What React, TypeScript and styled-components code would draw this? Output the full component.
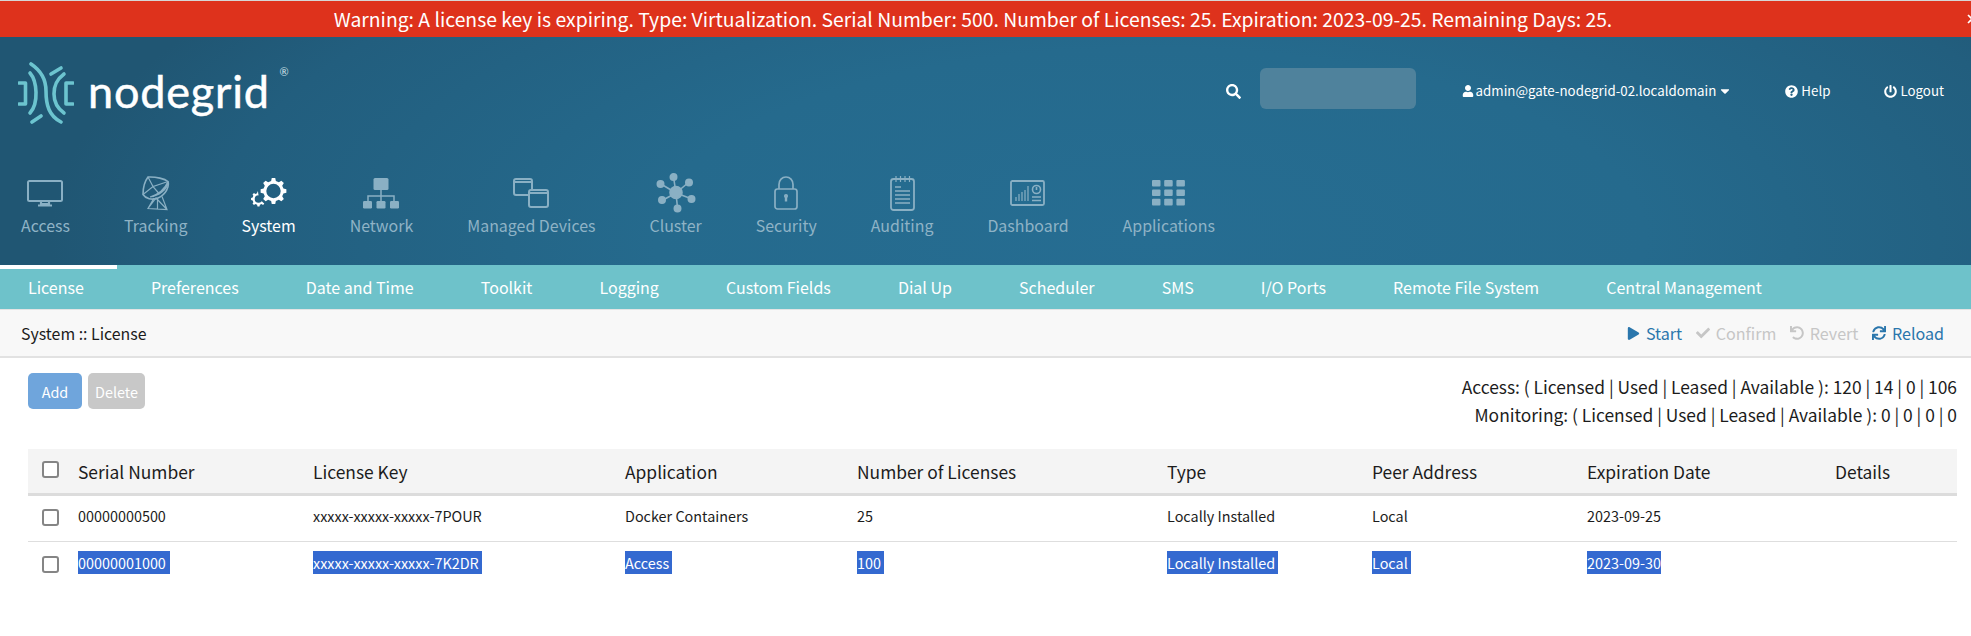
import React from "react";
import styled, { createGlobalStyle } from "styled-components";
import { FaCaretDown, FaCheck, FaPlay, FaPowerOff, FaQuestionCircle, FaSearch, FaSync, FaUndo, FaUser } from "react-icons/fa";

const FONT = `"Noto Sans CJK SC", "Open Sans", sans-serif`;
const NAV_ICON = "#8ab0c4";

const GlobalStyle = createGlobalStyle`
  html, body {
    margin: 0;
    background: #fff;
    font-family: ${FONT};
    color: #1c1c1c;
  }
  * { box-sizing: border-box; }
`;

const Page = styled.div`
  width: 1971px;
  height: 636px;
  overflow: hidden;
  border-top: 1px solid #d6d6d6;
`;

const Banner = styled.div`
  position: relative;
  height: 36px;
  background: #de321c;
  color: #fff;
  font-size: 19.35px;
  line-height: 36px;
  text-align: center;
  padding-right: 25px;
  overflow: hidden;
`;

const BannerClose = styled.svg`
  position: absolute;
  right: -6px;
  top: 13px;
`;

const Header = styled.header`
  height: 228px;
  background: radial-gradient(ellipse 1100px 420px at 1150px 200px, #266d92 0%, #256a8d 45%, #225e7e 85%, #205673 100%);
`;

const TopBar = styled.div`
  height: 112px;
  margin-bottom: 24px;
  display: flex;
  align-items: center;
  justify-content: space-between;
  padding: 0 27px 0 18px;
`;

const Logo = styled.div`
  display: flex;
  align-items: center;
`;

const LogoWord = styled.span`
  position: relative;
  margin: 0 0 5px 14px;
  font-family: "Lato", sans-serif;
  font-size: 45px;
  line-height: 50px;
  color: #fff;
  letter-spacing: 0.8px;
  -webkit-text-stroke: 0.5px #fff;
`;

const Registered = styled.span`
  position: absolute;
  right: -19px;
  top: 0;
  font-size: 11px;
  line-height: 12px;
  color: #cfe0e8;
  letter-spacing: 0;
  -webkit-text-stroke: 0;
`;

const TopActions = styled.div`
  display: flex;
  align-items: center;
  padding-bottom: 4px;
  color: #fff;
  font-size: 13.3px;
`;

const SearchBox = styled.div`
  width: 156px;
  height: 41px;
  margin: 0 46px 5px 19px;
  border-radius: 6px;
  background: #4f829c;
`;

const TopLink = styled.span<{ $gap?: number; $iconGap?: number }>`
  display: inline-flex;
  align-items: center;
  gap: ${(props) => props.$iconGap ?? 3}px;
  margin-left: ${(props) => props.$gap ?? 0}px;
  line-height: 20px;
`;

const MainNav = styled.nav`
  display: flex;
  gap: 54px;
  padding-left: 21px;
`;

const NavItem = styled.div<{ $active?: boolean }>`
  display: flex;
  flex-direction: column;
  align-items: center;
  color: ${(props) => (props.$active ? "#fff" : "#8fb3c6")};
  font-size: 15.95px;
  line-height: 20px;
`;

const NavIcon = styled.div`
  height: 40px;
  margin-bottom: 2px;
  display: flex;
  align-items: center;
  justify-content: center;
`;

const TabBar = styled.div`
  height: 45px;
  display: flex;
  gap: 67.1px;
  padding-left: 28px;
  background: #6ec2ca;
  border-bottom: 1px solid #e4e4e4;
  color: #fff;
  font-size: 16px;
  line-height: 44px;
`;

const Tab = styled.div<{ $active?: boolean }>`
  position: relative;
  &::before {
    content: "";
    display: ${(props) => (props.$active ? "block" : "none")};
    position: absolute;
    left: -28px;
    top: 0;
    width: 117px;
    height: 4px;
    background: #fff;
  }
`;

const Breadcrumb = styled.div`
  height: 48px;
  display: flex;
  align-items: center;
  justify-content: space-between;
  padding: 0 27px 0 21px;
  background: #f8f8f8;
  border-bottom: 2px solid #e2e2e2;
  font-size: 15.9px;
`;

const Actions = styled.div`
  display: flex;
  gap: 14px;
  font-size: 16.1px;
`;

const Action = styled.span<{ $disabled?: boolean }>`
  display: inline-flex;
  align-items: center;
  gap: 5.5px;
  color: ${(props) => (props.$disabled ? "#c6c6c6" : "#2a76ac")};
`;

const Content = styled.main`
  padding: 15px 14px 0 28px;
`;

const ToolRow = styled.div`
  height: 76px;
  display: flex;
  justify-content: space-between;
`;

const Buttons = styled.div`
  display: flex;
  gap: 6px;
  align-items: flex-start;
`;

const Button = styled.button<{ $color: string; $width: number }>`
  width: ${(props) => props.$width}px;
  height: 36px;
  border: 0;
  border-radius: 5px;
  background: ${(props) => props.$color};
  color: #fff;
  font-family: ${FONT};
  font-size: 14.4px;
  padding: 0;
`;

const Stats = styled.div`
  text-align: right;
  font-size: 17.4px;
  line-height: 28px;
`;

const Row = styled.div<{ $head?: boolean; $height: number }>`
  height: ${(props) => props.$height}px;
  display: grid;
  grid-template-columns: 50px 235px 312px 232px 310px 205px 215px 248px 122px;
  align-items: center;
  background: ${(props) => (props.$head ? "#f4f4f4" : "transparent")};
  border-bottom: ${(props) => (props.$head ? "3px solid #dcdcdc" : "1px solid #dedede")};
  font-size: ${(props) => (props.$head ? 17.4 : 14.4)}px;
`;

const LastRow = styled(Row)`
  border-bottom: 0;
`;

const Cell = styled.div<{ $lift?: number }>`
  margin-bottom: ${(props) => props.$lift ?? 0}px;
`;

const CheckCell = styled(Cell)`
  padding-left: 14px;
  display: flex;
`;

const CheckBox = styled.span`
  display: block;
  width: 17px;
  height: 17px;
  border: 2px solid #858585;
  border-radius: 3px;
  background: #fff;
`;

const Selected = styled.span<{ $trail: number }>`
  display: inline-block;
  height: 23px;
  line-height: 23px;
  padding-right: ${(props) => props.$trail}px;
  background: #3469d0;
  color: #fff;
`;

const gearPath = (cx: number, cy: number, outer: number, inner: number, hole: number, teeth: number) => {
  const pts: string[] = [];
  for (let i = 0; i < teeth; i++) {
    const step = (Math.PI * 2) / teeth;
    const a = i * step;
    [
      [inner, a - step * 0.3],
      [outer, a - step * 0.17],
      [outer, a + step * 0.17],
      [inner, a + step * 0.3],
    ].forEach(([r, t]) => pts.push(`${(cx + r * Math.cos(t)).toFixed(2)} ${(cy + r * Math.sin(t)).toFixed(2)}`));
  }
  const ring = `M${cx - hole} ${cy}a${hole} ${hole} 0 1 0 ${hole * 2} 0a${hole} ${hole} 0 1 0 ${-hole * 2} 0Z`;
  return `M${pts.join("L")}Z${ring}`;
};

const LogoMark = () => (
  <svg width="56" height="62" viewBox="0 0 56 62" fill="none" stroke="#6cc4cf" strokeWidth="3.6" strokeLinecap="round" strokeLinejoin="round">
    <path d="M1 21h6.5v21H1" />
    <path d="M12 11c7 8 9 30 0 40" />
    <path d="M13 2c12 8 15 17 15 27 0 14 3 25 15 31" />
    <path d="M33 12l10-6" />
    <path d="M14 60l9-6" />
    <path d="M46 12c-8 6-10 12-10 20s3 14 10 19" />
    <path d="M55 21h-7v21h7" />
  </svg>
);

const iconProps = { fill: "none", stroke: NAV_ICON, strokeWidth: 2 };

const AccessIcon = () => (
  <svg width="36" height="27" viewBox="0 0 36 27" {...iconProps}>
    <rect x="1" y="1" width="34" height="20" rx="1.5" />
    <path d="M14 22v2h8v-2M11 25.5h14" strokeWidth="2.2" />
  </svg>
);

const TrackingIcon = () => (
  <svg width="28" height="35" viewBox="0 0 28 35" {...iconProps} strokeWidth="1.2">
    <path d="M6 1c8-.5 17 2 20 4.500 1.500 5-2 13-10 16.500-6 2.500-12.500.5-15-3.500C1 12 3 5 6 1Z" strokeWidth="1.6" />
    <path d="M26 5.500c-3 7-10 13-18 15.500 8-1 18-7 18-15.500Z" fill={NAV_ICON} />
    <path d="M6 1l5 9.500L26 5.500M1 18.500L11 10.500l6 7" />
    <path d="M12 22l-6 10.500 19 1-5-13M6 32.500l8-10.500 11 11.500M15.500 22v11" />
  </svg>
);

const SystemIcon = ({ color }: { color: string }) => (
  <svg width="36" height="30" viewBox="0 0 36 30">
    <mask id="small-gear">
      <rect width="36" height="30" fill="#fff" />
      <circle cx="22.5" cy="13" r="15.5" fill="#000" />
    </mask>
    <path fill={color} fillRule="evenodd" d={gearPath(22.500, 13, 13, 10.200, 7.200, 8)} />
    <path fill={color} fillRule="evenodd" mask="url(#small-gear)" d={gearPath(7.5, 21, 7.5, 6, 3.8, 8)} />
  </svg>
);

const NetworkIcon = () => (
  <svg width="36" height="31" viewBox="0 0 36 31">
    <rect x="10.5" y="0" width="15" height="12" rx="1.5" fill={NAV_ICON} />
    <path d="M18 12v6M5 24v-6h26v6M18 18v6" stroke={NAV_ICON} strokeWidth="1.5" fill="none" />
    <rect x="0" y="23" width="9" height="7.5" rx="1.2" fill={NAV_ICON} />
    <rect x="13.5" y="23" width="9" height="7.5" rx="1.2" fill={NAV_ICON} />
    <rect x="27" y="23" width="9" height="7.5" rx="1.2" fill={NAV_ICON} />
  </svg>
);

const ManagedIcon = () => (
  <svg width="36" height="30" viewBox="0 0 36 30" {...iconProps}>
    <path d="M15 17H3a2 2 0 0 1-2-2V3a2 2 0 0 1 2-2h14a2 2 0 0 1 2 2v8M1 4h18" />
    <rect x="16" y="12" width="19" height="17" rx="2" />
    <path d="M16 15h19" />
  </svg>
);

const ClusterIcon = () => (
  <svg width="40" height="40" viewBox="0 0 40 40" fill={NAV_ICON} stroke={NAV_ICON} strokeWidth="1.6">
    <path d="M20 20L17.5 4M20 20L33 9M20 20L36 26M20 20L21.5 35M20 20L7 27M20 20L5 11" fill="none" />
    <circle cx="20" cy="19.5" r="6" />
    <circle cx="17.5" cy="4" r="3.2" />
    <circle cx="33" cy="9.5" r="3.2" />
    <circle cx="35.5" cy="26" r="3.2" />
    <circle cx="21.5" cy="35.5" r="3.2" />
    <circle cx="6" cy="27" r="3.2" />
    <circle cx="4.5" cy="11" r="3.2" />
  </svg>
);

const SecurityIcon = () => (
  <svg width="24" height="34" viewBox="0 0 24 34" {...iconProps} strokeWidth="1.7">
    <rect x="1" y="13" width="22" height="20" rx="2.5" />
    <path d="M5 13V8.5C5 4 8 1 12 1s7 3 7 7.5V13" />
    <path d="M12 20.5v5" strokeWidth="2.4" />
    <circle cx="12" cy="20" r="1.2" />
  </svg>
);

const AuditingIcon = () => (
  <svg width="25" height="36" viewBox="0 0 25 36" {...iconProps} strokeWidth="1.5">
    <rect x="1" y="4" width="23" height="31" rx="2.5" strokeWidth="1.8" />
    <path d="M6 1v6M10.5 1v6M15 1v6M19.5 1v6" strokeWidth="1.2" />
    <path d="M5 12h6M5 16h15M5 20h15M5 24h15M5 28h15" strokeWidth="1.6" />
  </svg>
);

const DashboardIcon = () => (
  <svg width="35" height="26" viewBox="0 0 35 26" {...iconProps} strokeWidth="1.6">
    <rect x="1" y="1" width="33" height="24" rx="1.5" strokeWidth="1.8" />
    <path d="M6 21v-4M9 21v-7M12 21v-9M15 21v-11M18 21V6" strokeWidth="1.2" />
    <circle cx="26.5" cy="9.5" r="4" />
    <path d="M26.5 7v3M22 17h9M22 20.5h9" />
  </svg>
);

const ApplicationsIcon = () => (
  <svg width="33" height="26" viewBox="0 0 33 26" fill={NAV_ICON}>
    {[0, 1, 2].flatMap((r) =>
      [0, 1, 2].map((c) => <rect key={`${r}-${c}`} x={c * 12.2} y={r * 9.4} width="8.5" height="6.6" rx="1" />)
    )}
  </svg>
);

const NAV = [
  { label: "Access", icon: <AccessIcon /> },
  { label: "Tracking", icon: <TrackingIcon /> },
  { label: "System", icon: <SystemIcon color="#fff" />, active: true },
  { label: "Network", icon: <NetworkIcon /> },
  { label: "Managed Devices", icon: <ManagedIcon /> },
  { label: "Cluster", icon: <ClusterIcon /> },
  { label: "Security", icon: <SecurityIcon /> },
  { label: "Auditing", icon: <AuditingIcon /> },
  { label: "Dashboard", icon: <DashboardIcon /> },
  { label: "Applications", icon: <ApplicationsIcon /> },
];

const TABS = ["License", "Preferences", "Date and Time", "Toolkit", "Logging", "Custom Fields", "Dial Up", "Scheduler", "SMS", "I/O Ports", "Remote File System", "Central Management"];

const COLUMNS = ["Serial Number", "License Key", "Application", "Number of Licenses", "Type", "Peer Address", "Expiration Date", "Details"];

const ROW_ONE = ["00000000500", "xxxxx-xxxxx-xxxxx-7POUR", "Docker Containers", "25", "Locally Installed", "Local", "2023-09-25"];

const ROW_TWO: [string, number][] = [
  ["00000001000", 4],
  ["xxxxx-xxxxx-xxxxx-7K2DR", 3],
  ["Access", 3],
  ["100", 3],
  ["Locally Installed", 3],
  ["Local", 3],
  ["2023-09-30", 0],
];

export default function App() {
  return (
    <Page>
      <GlobalStyle />
      <Banner>
        Warning: A license key is expiring. Type: Virtualization. Serial Number: 500. Number of Licenses: 25. Expiration: 2023-09-25. Remaining Days: 25.
        <BannerClose width="10" height="10" viewBox="0 0 10 10" fill="none" stroke="#fff" strokeWidth="1.6">
          <path d="M1 1l8 8M9 1l-8 8" />
        </BannerClose>
      </Banner>
      <Header>
        <TopBar>
          <Logo>
            <LogoMark />
            <LogoWord>
              nodegrid
              <Registered>®</Registered>
            </LogoWord>
          </Logo>
          <TopActions>
            <FaSearch size={15} />
            <SearchBox />
            <TopLink $iconGap={2}>
              <FaUser size={12} />
              admin@gate-nodegrid-02.localdomain
              <FaCaretDown size={14} />
            </TopLink>
            <TopLink $gap={53}>
              <FaQuestionCircle size={13} />
              Help
            </TopLink>
            <TopLink $gap={54}>
              <FaPowerOff size={13} />
              Logout
            </TopLink>
          </TopActions>
        </TopBar>
        <MainNav>
          {NAV.map((item) => (
            <NavItem key={item.label} $active={item.active}>
              <NavIcon>{item.icon}</NavIcon>
              {item.label}
            </NavItem>
          ))}
        </MainNav>
      </Header>
      <TabBar>
        {TABS.map((tab, i) => (
          <Tab key={tab} $active={i === 0}>
            {tab}
          </Tab>
        ))}
      </TabBar>
      <Breadcrumb>
        System :: License
        <Actions>
          <Action>
            <FaPlay size={13} />
            Start
          </Action>
          <Action $disabled>
            <FaCheck size={14} />
            Confirm
          </Action>
          <Action $disabled>
            <FaUndo size={14} />
            Revert
          </Action>
          <Action>
            <FaSync size={14} />
            Reload
          </Action>
        </Actions>
      </Breadcrumb>
      <Content>
        <ToolRow>
          <Buttons>
            <Button $color="#6fa5dc" $width={54}>Add</Button>
            <Button $color="#c8c8c8" $width={57}>Delete</Button>
          </Buttons>
          <Stats>
            <div>Access: ( Licensed | Used | Leased | Available ): 120 | 14 | 0 | 106</div>
            <div>Monitoring: ( Licensed | Used | Leased | Available ): 0 | 0 | 0 | 0</div>
          </Stats>
        </ToolRow>
        <Row $head $height={47}>
          <CheckCell $lift={3}><CheckBox /></CheckCell>
          {COLUMNS.map((col) => (
            <Cell key={col}>{col}</Cell>
          ))}
        </Row>
        <Row $height={46}>
          <CheckCell $lift={2}><CheckBox /></CheckCell>
          {ROW_ONE.map((cell) => (
            <Cell key={cell} $lift={6}>{cell}</Cell>
          ))}
        </Row>
        <LastRow $height={44}>
          <CheckCell><CheckBox /></CheckCell>
          {ROW_TWO.map(([cell, trail]) => (
            <Cell key={cell} $lift={4}>
              <Selected $trail={trail}>{cell}</Selected>
            </Cell>
          ))}
        </LastRow>
      </Content>
    </Page>
  );
}
